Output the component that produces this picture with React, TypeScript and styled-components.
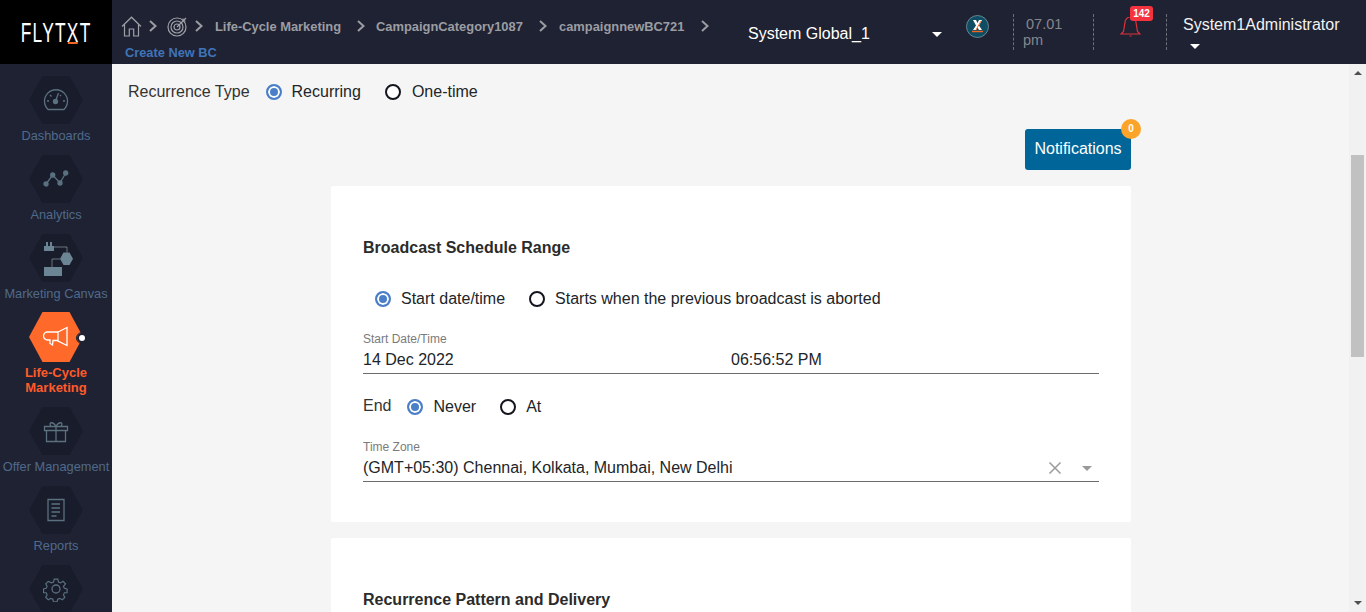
import { Fragment } from 'react';
import styled, { createGlobalStyle } from 'styled-components';

const GlobalStyle = createGlobalStyle`
    html, body {
        margin: 0;
        height: 100%;
        overflow: hidden;
        font-family: 'Liberation Sans', Arial, sans-serif;
        background: #f5f5f5;
    }
`;

const Page = styled.div`
    width: 1366px;
    height: 612px;
    overflow: hidden;
    display: flex;
    flex-direction: column;
`;

const Header = styled.header`
    height: 64px;
    flex: none;
    display: flex;
    background: #1f2233;
`;

const LogoBox = styled.div`
    width: 112px;
    flex: none;
    background: #000;
    display: flex;
    align-items: center;
    justify-content: center;
    color: #fff;
    padding-top: 2px;
    box-sizing: border-box;
`;

const LogoText = styled.span`
    font-size: 28px;
    line-height: 32px;
    font-weight: 400;
    letter-spacing: 2px;
    transform: scaleX(0.62);
    white-space: nowrap;
    u {
        text-decoration: none;
        position: relative;
        display: inline-block;
    }
    u::after {
        content: '';
        position: absolute;
        left: 2px;
        right: 3px;
        bottom: 5px;
        height: 2px;
        background: #f26522;
    }
`;

const Crumbs = styled.div`
    width: 620px;
    flex: none;
    padding: 14px 0 0 9px;
    box-sizing: border-box;
`;

const CrumbRow = styled.div`
    display: flex;
    align-items: center;
    height: 24px;
`;

const CrumbText = styled.span<{ $w: number }>`
    width: ${(p) => p.$w}px;
    flex: none;
    font-size: 12.9px;
    font-weight: 700;
    color: #9b9da2;
    white-space: nowrap;
`;

const Chevron = styled.svg<{ $ml: number; $mr: number }>`
    width: 10px;
    height: 12px;
    margin-left: ${(p) => p.$ml}px;
    margin-right: ${(p) => p.$mr}px;
    flex: none;
`;

const CreateLink = styled.div`
    margin: 7px 0 0 4px;
    font-size: 12.8px;
    font-weight: 700;
    color: #3f74b8;
`;

const GlobalPicker = styled.div`
    width: 210px;
    flex: none;
    padding-top: 25px;
    box-sizing: border-box;
    padding-left: 16px;
    display: flex;
    align-items: flex-start;
    justify-content: space-between;
    color: #fff;
    font-size: 16px;
    line-height: 18px;
`;

const Caret = styled.span`
    width: 0;
    height: 0;
    display: block;
    border-left: 5px solid transparent;
    border-right: 5px solid transparent;
    border-top: 5px solid #fff;
`;

const PickerCaret = styled(Caret)`
    margin-top: 7px;
`;

const XBadgeBox = styled.div`
    width: 47px;
    flex: none;
    padding: 15px 0 0 24px;
    box-sizing: content-box;
`;

const Divided = styled.div<{ $w: number }>`
    width: ${(p) => p.$w}px;
    flex: none;
    margin-top: 14px;
    height: 36px;
    border-left: 1px dashed #6d7079;
    box-sizing: border-box;
    position: relative;
`;

const Clock = styled.div`
    color: #85878d;
    font-size: 14.5px;
    line-height: 16px;
    padding: 2px 0 0 9px;
    span {
        display: block;
        padding-left: 3px;
    }
`;

const BellBox = styled.div`
    padding: 3px 0 0 26px;
`;

const BellBadge = styled.span`
    position: absolute;
    left: 36px;
    top: -8px;
    width: 23px;
    height: 15px;
    border-radius: 3px;
    background: #f5333f;
    color: #fff;
    font-size: 10px;
    font-weight: 700;
    line-height: 15px;
    text-align: center;
`;

const UserBox = styled.div`
    color: #f2f2f2;
    font-size: 16px;
    line-height: 18px;
    padding: 2px 0 0 16px;
    white-space: nowrap;
`;

const UserCaret = styled(Caret)`
    margin: 10px 0 0 7px;
`;

const Body = styled.div`
    flex: 1;
    display: flex;
    min-height: 0;
`;

const Sidebar = styled.nav`
    width: 112px;
    flex: none;
    background: #1f2233;
    display: flex;
    flex-direction: column;
    align-items: center;
    padding-top: 12px;
    box-sizing: border-box;
    overflow: hidden;
`;

const NavItem = styled.div<{ $h: number }>`
    width: 112px;
    height: ${(p) => p.$h}px;
    flex: none;
    display: flex;
    flex-direction: column;
    align-items: center;
    position: relative;
`;

const Hexagon = styled.div<{ $active?: boolean }>`
    width: 54px;
    height: ${(p) => (p.$active ? 50 : 48)}px;
    flex: none;
    background: ${(p) => (p.$active ? '#ff6a2b' : '#191c2a')};
    clip-path: polygon(25% 0, 75% 0, 100% 50%, 75% 100%, 25% 100%, 0 50%);
    display: flex;
    align-items: center;
    justify-content: center;
`;

const NavLabel = styled.div<{ $active?: boolean }>`
    margin-top: ${(p) => (p.$active ? 3 : 4)}px;
    font-size: ${(p) => (p.$active ? 13 : 12.8)}px;
    line-height: 15px;
    font-weight: ${(p) => (p.$active ? 700 : 400)};
    color: ${(p) => (p.$active ? '#ff5a2a' : '#4f6a8a')};
    text-align: center;
    white-space: nowrap;
`;

const ActiveDot = styled.span`
    position: absolute;
    left: 77px;
    top: 21px;
    width: 6px;
    height: 6px;
    border-radius: 50%;
    background: #fff;
    border: 2px solid #1f2233;
    outline: 1px solid #1f2233;
`;

const Main = styled.main`
    flex: 1;
    min-width: 0;
    display: flex;
    flex-direction: column;
    overflow: hidden;
`;

const TypeRow = styled.div`
    display: flex;
    align-items: center;
    height: 20px;
    margin: 19px 0 0 16px;
`;

const TypeLabel = styled.span`
    font-size: 16px;
    color: #333;
    margin-right: 16px;
`;

const RadioOption = styled.label<{ $gap?: number; $mr?: number }>`
    display: inline-flex;
    align-items: center;
    gap: ${(p) => p.$gap ?? 10}px;
    margin-right: ${(p) => p.$mr ?? 0}px;
    font-size: 16px;
    color: #212529;
    white-space: nowrap;
`;

const RadioDot = styled.span<{ $checked?: boolean }>`
    width: 16px;
    height: 16px;
    box-sizing: border-box;
    flex: none;
    border-radius: 50%;
    border: 2px solid ${(p) => (p.$checked ? '#4a7fc7' : '#14161f')};
    background: ${(p) => (p.$checked ? '#4a7fc7' : '#fff')};
    box-shadow: ${(p) => (p.$checked ? 'inset 0 0 0 2px #fff' : 'none')};
`;

const Column = styled.div`
    width: 800px;
    margin-left: 219px;
`;

const NotifyRow = styled.div`
    display: flex;
    justify-content: flex-end;
    margin-top: 28px;
`;

const NotifyButton = styled.button`
    position: relative;
    width: 106px;
    height: 41px;
    border: none;
    border-radius: 3px;
    background: #006699;
    color: #fff;
    font: 16px 'Liberation Sans', Arial, sans-serif;
    padding: 0 0 2px;
`;

const NotifyBadge = styled.span`
    position: absolute;
    top: -10px;
    right: -10px;
    width: 20px;
    height: 20px;
    border-radius: 50%;
    background: #fba429;
    font-size: 10px;
    font-weight: 700;
    line-height: 20px;
    text-align: center;
`;

const Card = styled.section<{ $h: number }>`
    background: #fff;
    height: ${(p) => p.$h}px;
    margin-top: 16px;
    padding: 52px 32px 0;
    box-sizing: border-box;
    border-radius: 2px;
`;

const CardTitle = styled.h3`
    margin: 0;
    font-size: 16px;
    line-height: 20px;
    font-weight: 700;
    color: #2b2b2b;
`;

const RadioRow = styled.div`
    display: flex;
    align-items: center;
    height: 20px;
    margin: 31px 0 0 12px;
`;

const Field = styled.div`
    margin-top: 23px;
    border-bottom: 1px solid #6b6b6b;
    height: 42px;
    box-sizing: border-box;
`;

const FieldLabel = styled.div`
    font-size: 12px;
    line-height: 14px;
    color: #7b7b7b;
`;

const FieldValue = styled.div`
    display: flex;
    align-items: center;
    height: 22px;
    margin-top: 3px;
    font-size: 16px;
    color: #212529;
`;

const DateCell = styled.span`
    width: 368px;
`;

const Grow = styled.span`
    flex: 1;
`;

const ClearIcon = styled.svg`
    width: 14px;
    height: 14px;
    margin-right: 20px;
`;

const SelectCaret = styled.span`
    width: 0;
    height: 0;
    margin-right: 7px;
    border-left: 5px solid transparent;
    border-right: 5px solid transparent;
    border-top: 5px solid #9a9a9a;
`;

const EndRow = styled.div`
    display: flex;
    align-items: center;
    height: 20px;
    margin-top: 23px;
`;

const EndLabel = styled.span`
    font-size: 16px;
    color: #333;
    margin-right: 16px;
    position: relative;
    top: -1px;
`;

const ScrollTrack = styled.div`
    width: 17px;
    flex: none;
    background: #f1f1f1;
    position: relative;
`;

const ScrollThumb = styled.div`
    position: absolute;
    left: 2px;
    right: 2px;
    top: 91px;
    height: 202px;
    background: #c1c1c1;
`;

const ScrollArrow = styled.span<{ $up?: boolean }>`
    position: absolute;
    left: 5px;
    ${(p) => (p.$up ? 'top: 7px;' : 'bottom: 7px;')}
    border-left: 4px solid transparent;
    border-right: 4px solid transparent;
    ${(p) => (p.$up ? 'border-bottom: 4px solid #505050;' : 'border-top: 4px solid #505050;')}
`;

const HomeIcon = () => (
    <svg width="21" height="21" viewBox="0 0 21 21" fill="none" stroke="#9fa1a8" strokeWidth="1.2">
        <path d="M1 10.5 10.5 1.2 20 10.5" />
        <path d="M3.5 8.5V20h4.8v-7h4.4v7h4.8V8.5" />
    </svg>
);

const TargetIcon = () => (
    <svg width="21" height="21" viewBox="0 0 21 21" fill="none" stroke="#9fa1a8" strokeWidth="1.2">
        <circle cx="10" cy="11" r="9" />
        <circle cx="10" cy="11" r="6" />
        <circle cx="10" cy="11" r="3" />
        <path d="M10 11 19 2M16 2.5V5h2.5" />
    </svg>
);

const ChevronMark = ({ ml, mr }: { ml: number; mr: number }) => (
    <Chevron $ml={ml} $mr={mr} viewBox="0 0 10 12" fill="none" stroke="#9b9da2" strokeWidth="2">
        <path d="M2 1l5.5 5L2 11" />
    </Chevron>
);

const XBadge = () => (
    <svg width="23" height="23" viewBox="0 0 23 23">
        <circle cx="11.5" cy="11.5" r="11" fill="#0f4d63" stroke="#9fb5bd" strokeWidth="0.6" />
        <path d="M7 5h3l1.5 3L13 5h3l-3 5.5 3 4.5h-3l-1.5-2.500L10 15H7l3-4.500z" fill="#fff" />
        <path d="M6 16.500h11" stroke="#f26522" strokeWidth="1.4" />
        <path d="M15 6l-5 9" stroke="#f26522" strokeWidth="0.9" />
    </svg>
);

const Bell = () => (
    <svg width="21" height="20" viewBox="0 0 21 20" fill="none" stroke="#e0323c" strokeWidth="1.2">
        <path d="M1 17h19l-2.500-2.500-1.500-9a5.500 5.500 0 0 0-11 0l-1.500 9zM9.500 19h2" />
    </svg>
);

const icon = { width: 26, height: 26, fill: 'none', stroke: '#5b7180', strokeWidth: 1.3 };

const GaugeIcon = () => (
    <svg {...icon} viewBox="0 0 26 26">
        <path d="M5 22.500a11.500 11.500 0 1 1 16 0z" />
        <circle cx="12.500" cy="14.500" r="2" fill="#5b7180" />
        <path d="M13 13 15.500 6M4 14h2M20 14h2M7 8l1.500 1.500M18 8l-1 1" />
    </svg>
);

const AnalyticsIcon = () => (
    <svg {...icon} viewBox="0 0 26 26" fill="#5b7180">
        <path d="M3 18 9.700 9 17 17l5.700-10" fill="none" />
        <circle cx="3" cy="18" r="2" />
        <circle cx="9.700" cy="9" r="2" />
        <circle cx="17" cy="17" r="2" />
        <circle cx="22.700" cy="7" r="2" />
    </svg>
);

const CanvasIcon = () => (
    <svg width="36" height="36" viewBox="-6 0 36 36" fill="#6b8594">
        <path d="M0 6h10v5H0zM2 2h2v4H2zM6 2h2v4H6z" />
        <path d="M10 7h13v5.500M16 19H8v8" fill="none" stroke="#8f9aa3" strokeWidth="0.7" />
        <path d="M19.500 12.500h6l3.500 6.200-3.500 6.300h-6L16 18.700z" />
        <path d="M0 27h18v9H0z" />
    </svg>
);

const MegaphoneIcon = () => (
    <svg width="26" height="22" viewBox="0 0 26 22" fill="none" stroke="#fff" strokeWidth="1.3">
        <path d="M15 6 24 1.500v18L15 15z" />
        <path d="M15 6H4.500a3.500 3.500 0 0 0 0 8H7v3.500l2.500 1.500L10 14.500h5" />
    </svg>
);

const GiftIcon = () => (
    <svg {...icon} viewBox="0 0 26 26">
        <path d="M1.500 8.500h23v4h-23zM3.500 12.500v11h19v-11M13 8.500v15" />
        <path d="M13 8.500C10 3 5 4 8 8.500M13 8.500C16 3 21 4 18 8.500" />
    </svg>
);

const ReportIcon = () => (
    <svg {...icon} viewBox="0 0 26 26">
        <path d="M5 2.500h16v21H5zM8.500 7H17M8.500 11H17M8.500 15H17M8.500 19h5" />
    </svg>
);

const GearIcon = () => (
    <svg {...icon} viewBox="0 0 26 26">
        <circle cx="13" cy="13" r="4" />
        <path d="M11 2h4l.7 3.200 2.300 1 2.800-1.700 2.800 2.800L21.300 10l1 2.300 3 .7v4l-3 .2-1 2.300 1.500 2.700-2.800 2.800-2.800-1.600-2.300 1-.7 2.800h-4l-.7-2.800-2.300-1-2.800 1.600-2.800-2.800 1.500-2.700-1-2.300-3-.2v-4l3-.7 1-2.300-1.500-2.700 2.800-2.800L8 6.200l2.300-1z" transform="translate(1.300 1.300) scale(0.9)" />
    </svg>
);

const crumbs = [
    { text: 'Life-Cycle Marketing', w: 141, mr: 10 },
    { text: 'CampaignCategory1087', w: 162, mr: 11 },
    { text: 'campaignnewBC721', w: 141, mr: 0 },
];

const navItems = [
    { label: 'Dashboards', icon: <GaugeIcon />, h: 79 },
    { label: 'Analytics', icon: <AnalyticsIcon />, h: 79 },
    { label: 'Marketing Canvas', icon: <CanvasIcon />, h: 78 },
];

const navItemsBelow = [
    { label: 'Offer Management', icon: <GiftIcon />, h: 79 },
    { label: 'Reports', icon: <ReportIcon />, h: 79 },
    { label: '', icon: <GearIcon />, h: 60 },
];

const App = () => {
    return (
        <Page>
            <GlobalStyle />
            <Header>
                <LogoBox>
                    <LogoText>
                        FLYT<u>X</u>T
                    </LogoText>
                </LogoBox>
                <Crumbs>
                    <CrumbRow>
                        <HomeIcon />
                        <ChevronMark ml={6} mr={9} />
                        <TargetIcon />
                        <ChevronMark ml={6} mr={11} />
                        {crumbs.map((crumb) => (
                            <Fragment key={crumb.text}>
                                <CrumbText $w={crumb.w}>{crumb.text}</CrumbText>
                                <ChevronMark ml={0} mr={crumb.mr} />
                            </Fragment>
                        ))}
                    </CrumbRow>
                    <CreateLink>Create New BC</CreateLink>
                </Crumbs>
                <GlobalPicker>
                    System Global_1
                    <PickerCaret />
                </GlobalPicker>
                <XBadgeBox>
                    <XBadge />
                </XBadgeBox>
                <Divided $w={80}>
                    <Clock>
                        <span>07.01</span>pm
                    </Clock>
                </Divided>
                <Divided $w={73}>
                    <BellBox>
                        <Bell />
                    </BellBox>
                    <BellBadge>142</BellBadge>
                </Divided>
                <Divided $w={190}>
                    <UserBox>
                        System1Administrator
                        <UserCaret />
                    </UserBox>
                </Divided>
            </Header>
            <Body>
                <Sidebar>
                    {navItems.map((item) => (
                        <NavItem key={item.label} $h={item.h}>
                            <Hexagon>{item.icon}</Hexagon>
                            <NavLabel>{item.label}</NavLabel>
                        </NavItem>
                    ))}
                    <NavItem $h={95}>
                        <Hexagon $active>
                            <MegaphoneIcon />
                        </Hexagon>
                        <NavLabel $active>
                            Life-Cycle
                            <br />
                            Marketing
                        </NavLabel>
                        <ActiveDot />
                    </NavItem>
                    {navItemsBelow.map((item) => (
                        <NavItem key={item.h + item.label} $h={item.h}>
                            <Hexagon>{item.icon}</Hexagon>
                            {item.label && <NavLabel>{item.label}</NavLabel>}
                        </NavItem>
                    ))}
                </Sidebar>
                <Main>
                    <TypeRow>
                        <TypeLabel>Recurrence Type</TypeLabel>
                        <RadioOption $mr={24}>
                            <RadioDot $checked />
                            Recurring
                        </RadioOption>
                        <RadioOption $gap={11}>
                            <RadioDot />
                            One-time
                        </RadioOption>
                    </TypeRow>
                    <Column>
                        <NotifyRow>
                            <NotifyButton>
                                Notifications
                                <NotifyBadge>0</NotifyBadge>
                            </NotifyButton>
                        </NotifyRow>
                        <Card $h={336}>
                            <CardTitle>Broadcast Schedule Range</CardTitle>
                            <RadioRow>
                                <RadioOption $mr={24}>
                                    <RadioDot $checked />
                                    Start date/time
                                </RadioOption>
                                <RadioOption>
                                    <RadioDot />
                                    Starts when the previous broadcast is aborted
                                </RadioOption>
                            </RadioRow>
                            <Field>
                                <FieldLabel>Start Date/Time</FieldLabel>
                                <FieldValue>
                                    <DateCell>14 Dec 2022</DateCell>
                                    06:56:52 PM
                                </FieldValue>
                            </Field>
                            <EndRow>
                                <EndLabel>End</EndLabel>
                                <RadioOption $mr={24}>
                                    <RadioDot $checked />
                                    Never
                                </RadioOption>
                                <RadioOption>
                                    <RadioDot />
                                    At
                                </RadioOption>
                            </EndRow>
                            <Field>
                                <FieldLabel>Time Zone</FieldLabel>
                                <FieldValue>
                                    <Grow>(GMT+05:30) Chennai, Kolkata, Mumbai, New Delhi</Grow>
                                    <ClearIcon viewBox="0 0 14 14" fill="none" stroke="#9a9a9a" strokeWidth="1.5">
                                        <path d="M1.500 1.500l11 11M12.500 1.500l-11 11" />
                                    </ClearIcon>
                                    <SelectCaret />
                                </FieldValue>
                            </Field>
                        </Card>
                        <Card $h={200}>
                            <CardTitle>Recurrence Pattern and Delivery</CardTitle>
                        </Card>
                    </Column>
                </Main>
                <ScrollTrack>
                    <ScrollArrow $up />
                    <ScrollThumb />
                    <ScrollArrow />
                </ScrollTrack>
            </Body>
        </Page>
    );
};

export default App;
